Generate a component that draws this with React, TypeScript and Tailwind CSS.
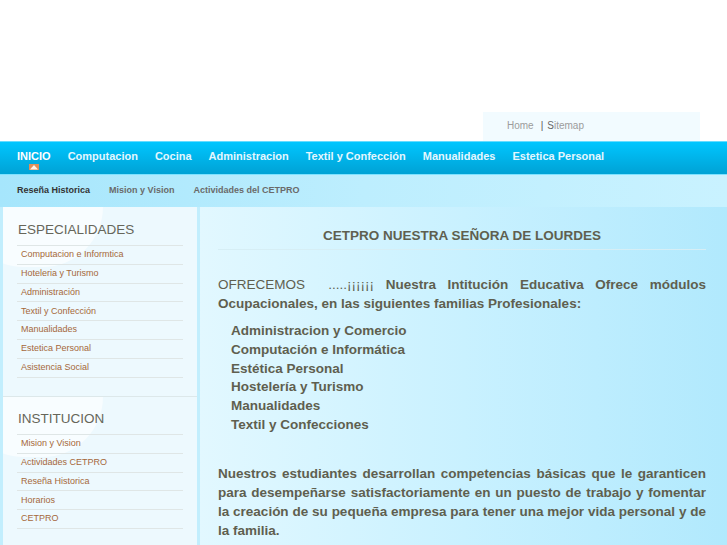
import React from "react";

const navItems = [
  "INICIO",
  "Computacion",
  "Cocina",
  "Administracion",
  "Textil y Confección",
  "Manualidades",
  "Estetica Personal",
];

const subItems = ["Reseña Historica", "Mision y Vision", "Actividades del CETPRO"];

const especialidades = [
  "Computacion e Informtica",
  "Hoteleria y Turismo",
  "Administración",
  "Textil y Confección",
  "Manualidades",
  "Estetica Personal",
  "Asistencia Social",
];

const institucion = ["Mision y Vision", "Actividades CETPRO", "Reseña Historica", "Horarios", "CETPRO"];

const familias = [
  "Administracion y Comercio",
  "Computación e Informática",
  "Estética Personal",
  "Hostelería y Turismo",
  "Manualidades",
  "Textil y Confecciones",
];

function SideBox({ title, items, className }: { title: string; items: string[]; className?: string }) {
  return (
    <div className={`relative overflow-hidden bg-[#edf9fe] pl-[14px] pr-[14px] ${className ?? ""}`}>
      {/* soft shine in the corner */}
      <div className="absolute -left-[40px] -top-[60px] w-[140px] h-[120px] rounded-full bg-white/60" />
      <div className="relative">
        <h2 className="pl-[1px] text-[13.5px] leading-[16px] text-[#66665a] mb-[7px]">{title}</h2>
        <ul className="border-b border-[#dfe6e6]">
          {items.map((it) => (
            <li
              key={it}
              className="h-[18.8px] border-t border-[#dfe6e6] pl-[4px] flex items-center text-[9px] text-[#a5683a]"
            >
              {it}
            </li>
          ))}
        </ul>
      </div>
    </div>
  );
}

export default function App() {
  return (
    <div className="w-[727px] h-[545px] overflow-hidden bg-white font-['Liberation_Sans',Arial,sans-serif]">
      <div className="h-[112px]" />

      {/* top links */}
      <div className="flex justify-end pr-[27px]">
        <div className="w-[217px] h-[29px] bg-[#f2fbff] pl-[24px] pb-[2px] flex items-center text-[10px] text-[#9c9c9c]">
          <span>Home</span>
          <span className="ml-[7px] mr-[4px] text-[#555]">|</span>
          <span>
            <span className="text-[#666]">S</span>itemap
          </span>
        </div>
      </div>

      {/* main nav */}
      <nav className="h-[34px] border-t border-[#66dcff] border-b border-b-[#7ee2ff] bg-gradient-to-b from-[#00c6ff] to-[#00a2d5] flex items-start gap-[17px] pl-[17px] pt-[7px]">
        {navItems.map((it, i) => (
          <div key={it} className="relative flex flex-col items-center">
            <span className={`text-[11px] font-bold leading-[14px] ${i === 0 ? "text-white" : "text-[#e4f7ff]"}`}>{it}</span>
            {i === 0 && (
              <svg width="10" height="6" viewBox="0 0 10 6" className="mt-[1px]">
                <rect width="10" height="6" fill="#e0905a" />
                <path d="M1 5.5 L5 1 L9 5.5 Z" fill="#fff4e8" />
              </svg>
            )}
          </div>
        ))}
      </nav>

      {/* sub nav */}
      <div className="h-[32px] bg-gradient-to-r from-[#a6e6fc] via-[#bdeefe] to-[#c9f2ff] flex items-center gap-[19px] pl-[17px]">
        {subItems.map((it, i) => (
          <span key={it} className={`text-[9px] font-bold ${i === 0 ? "text-[#333]" : "text-[#6a6a6a]"}`}>
            {it}
          </span>
        ))}
      </div>

      {/* body */}
      <div className="flex h-[338px] bg-[#c2eefd]">
        <aside className="ml-[3px] w-[194px] flex flex-col gap-[1px] bg-[#dde8ea]">
          <SideBox title="ESPECIALIDADES" items={especialidades} className="pt-[15px] h-[189px]" />
          <SideBox title="INSTITUCION" items={institucion} className="pt-[14px] flex-1" />
        </aside>

        <main className="ml-[3px] flex-1 bg-gradient-to-r from-[#e2f8ff] via-[#c9f1ff] to-[#b1e9fd] pl-[18px] pr-[21px] pt-[21px] text-[#5f5f4f]">
          <h1 className="text-center text-[13.5px] font-bold leading-[16px] pb-[5px] border-b border-[#d6eef5]">
            CETPRO NUESTRA SEÑORA DE LOURDES
          </h1>

          <p className="mt-[25px] text-[13.5px] leading-[19px] text-justify font-bold">
            <span className="font-normal">OFRECEMOS&nbsp;&nbsp;.....¡¡¡¡¡¡</span> Nuestra Intitución Educativa Ofrece
            módulos Ocupacionales, en las siguientes familias Profesionales:
          </p>

          <ul className="mt-[9px] pl-[13px] text-[13.5px] leading-[18.8px] font-bold">
            {familias.map((f) => (
              <li key={f}>{f}</li>
            ))}
          </ul>

          <p className="mt-[29px] text-[13.5px] leading-[19px] font-bold text-justify">
            Nuestros estudiantes desarrollan competencias básicas que le garanticen para desempeñarse satisfactoriamente
            en un puesto de trabajo y fomentar la creación de su pequeña empresa para tener una mejor vida personal y de
            la familia.
          </p>
        </main>
      </div>
    </div>
  );
}
